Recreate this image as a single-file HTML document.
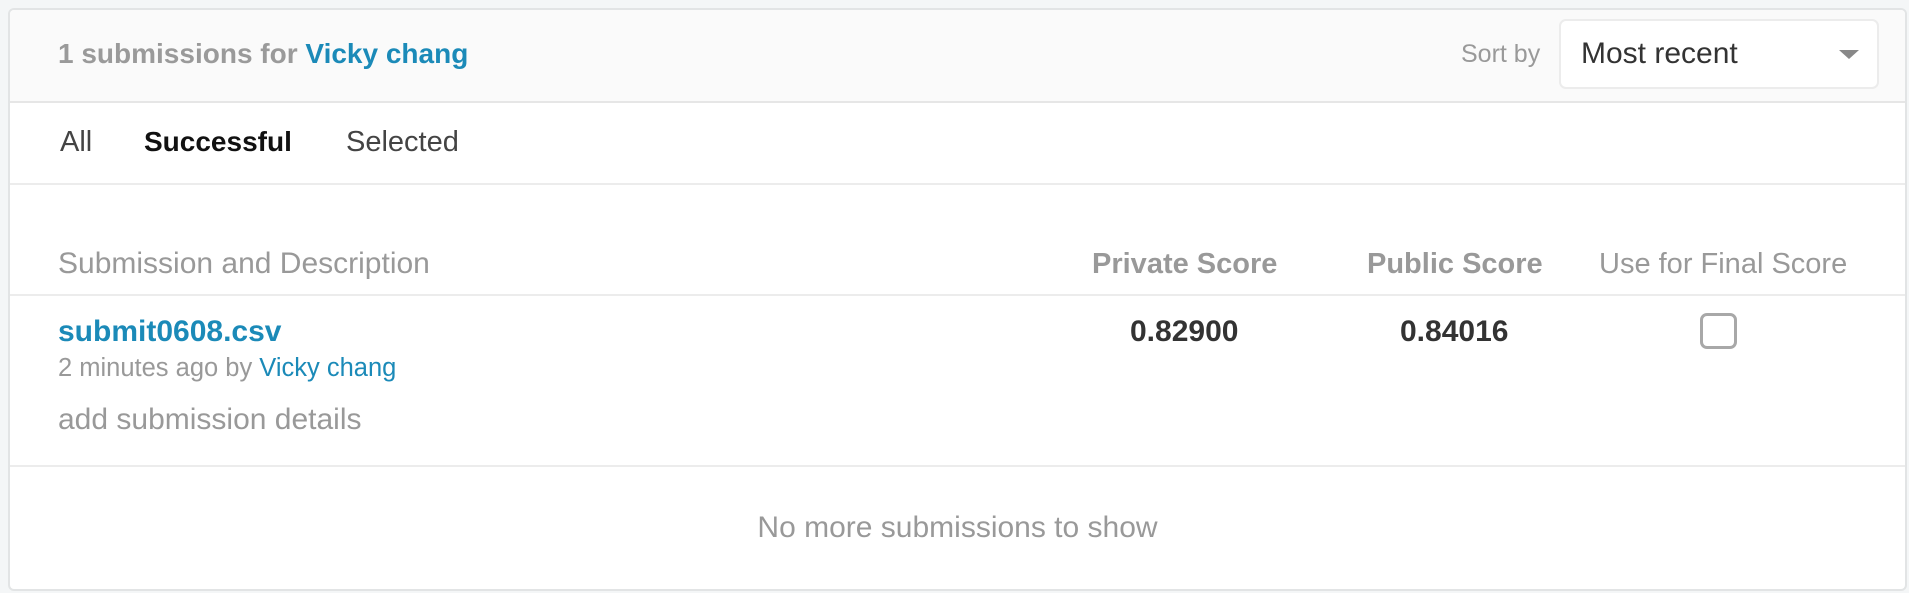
<!DOCTYPE html>
<html><head><meta charset="utf-8"><style>
*{margin:0;padding:0;box-sizing:border-box}
body{width:1909px;height:593px;background:#f4f6f7;font-family:"Liberation Sans",sans-serif;position:relative;overflow:hidden}
.card{position:absolute;left:8px;top:8px;width:1899px;height:583px;background:#fff;border:2px solid #e2e4e5;border-radius:6px;overflow:hidden}
.hdr{position:absolute;left:0;top:0;right:0;height:93px;background:#fafafa;border-bottom:2px solid #e6e6e6}
.t{position:absolute;white-space:nowrap;line-height:1}
.blue{color:#1b8ab8}
.sel{position:absolute;left:1549px;top:9px;width:320px;height:70px;background:#fff;border:2px solid #ececec;border-radius:7px}
.line{position:absolute;left:0;right:0;height:2px;background:#ececec}
.cb{position:absolute;left:1690px;top:303px;width:37px;height:36px;border:3px solid #a8a8a8;border-radius:7px}
</style></head><body>
<div class="card">
 <div class="hdr">
  <div class="t" style="left:48px;top:30px;font-size:28px;font-weight:bold;color:#9a9a9a">1 submissions for <span class="blue">Vicky chang</span></div>
  <div class="t" style="left:1451px;top:32px;font-size:25px;color:#999">Sort by</div>
  <div class="sel">
   <div class="t" style="left:20px;top:18px;font-size:30px;color:#333">Most recent</div>
   <div style="position:absolute;left:278px;top:29px;width:0;height:0;border-left:10px solid transparent;border-right:10px solid transparent;border-top:9px solid #888"></div>
  </div>
 </div>
 <div class="t" style="left:50px;top:118px;font-size:29px;color:#444">All</div>
 <div class="t" style="left:134px;top:118px;font-size:28px;font-weight:bold;color:#111">Successful</div>
 <div class="t" style="left:336px;top:118px;font-size:29px;color:#444">Selected</div>
 <div class="line" style="top:173px"></div>
 <div class="t" style="left:48px;top:239px;font-size:30px;color:#999">Submission and Description</div>
 <div class="t" style="left:1082px;top:240px;font-size:29px;font-weight:bold;color:#999">Private Score</div>
 <div class="t" style="left:1357px;top:240px;font-size:29px;font-weight:bold;color:#999">Public Score</div>
 <div class="t" style="left:1589px;top:240px;font-size:29px;color:#999">Use for Final Score</div>
 <div class="line" style="top:284px"></div>
 <div class="t blue" style="left:48px;top:307px;font-size:30px;font-weight:bold">submit0608.csv</div>
 <div class="t" style="left:1120px;top:307px;font-size:30px;font-weight:bold;color:#333">0.82900</div>
 <div class="t" style="left:1390px;top:307px;font-size:30px;font-weight:bold;color:#333">0.84016</div>
 <div class="cb"></div>
 <div class="t" style="left:48px;top:346px;font-size:25.5px;color:#999">2 minutes ago by <span class="blue">Vicky chang</span></div>
 <div class="t" style="left:48px;top:395px;font-size:30px;color:#999">add submission details</div>
 <div class="line" style="top:455px"></div>
 <div class="t" style="left:0;right:0;top:503px;text-align:center;font-size:30px;color:#999">No more submissions to show</div>
</div>
</body></html>
